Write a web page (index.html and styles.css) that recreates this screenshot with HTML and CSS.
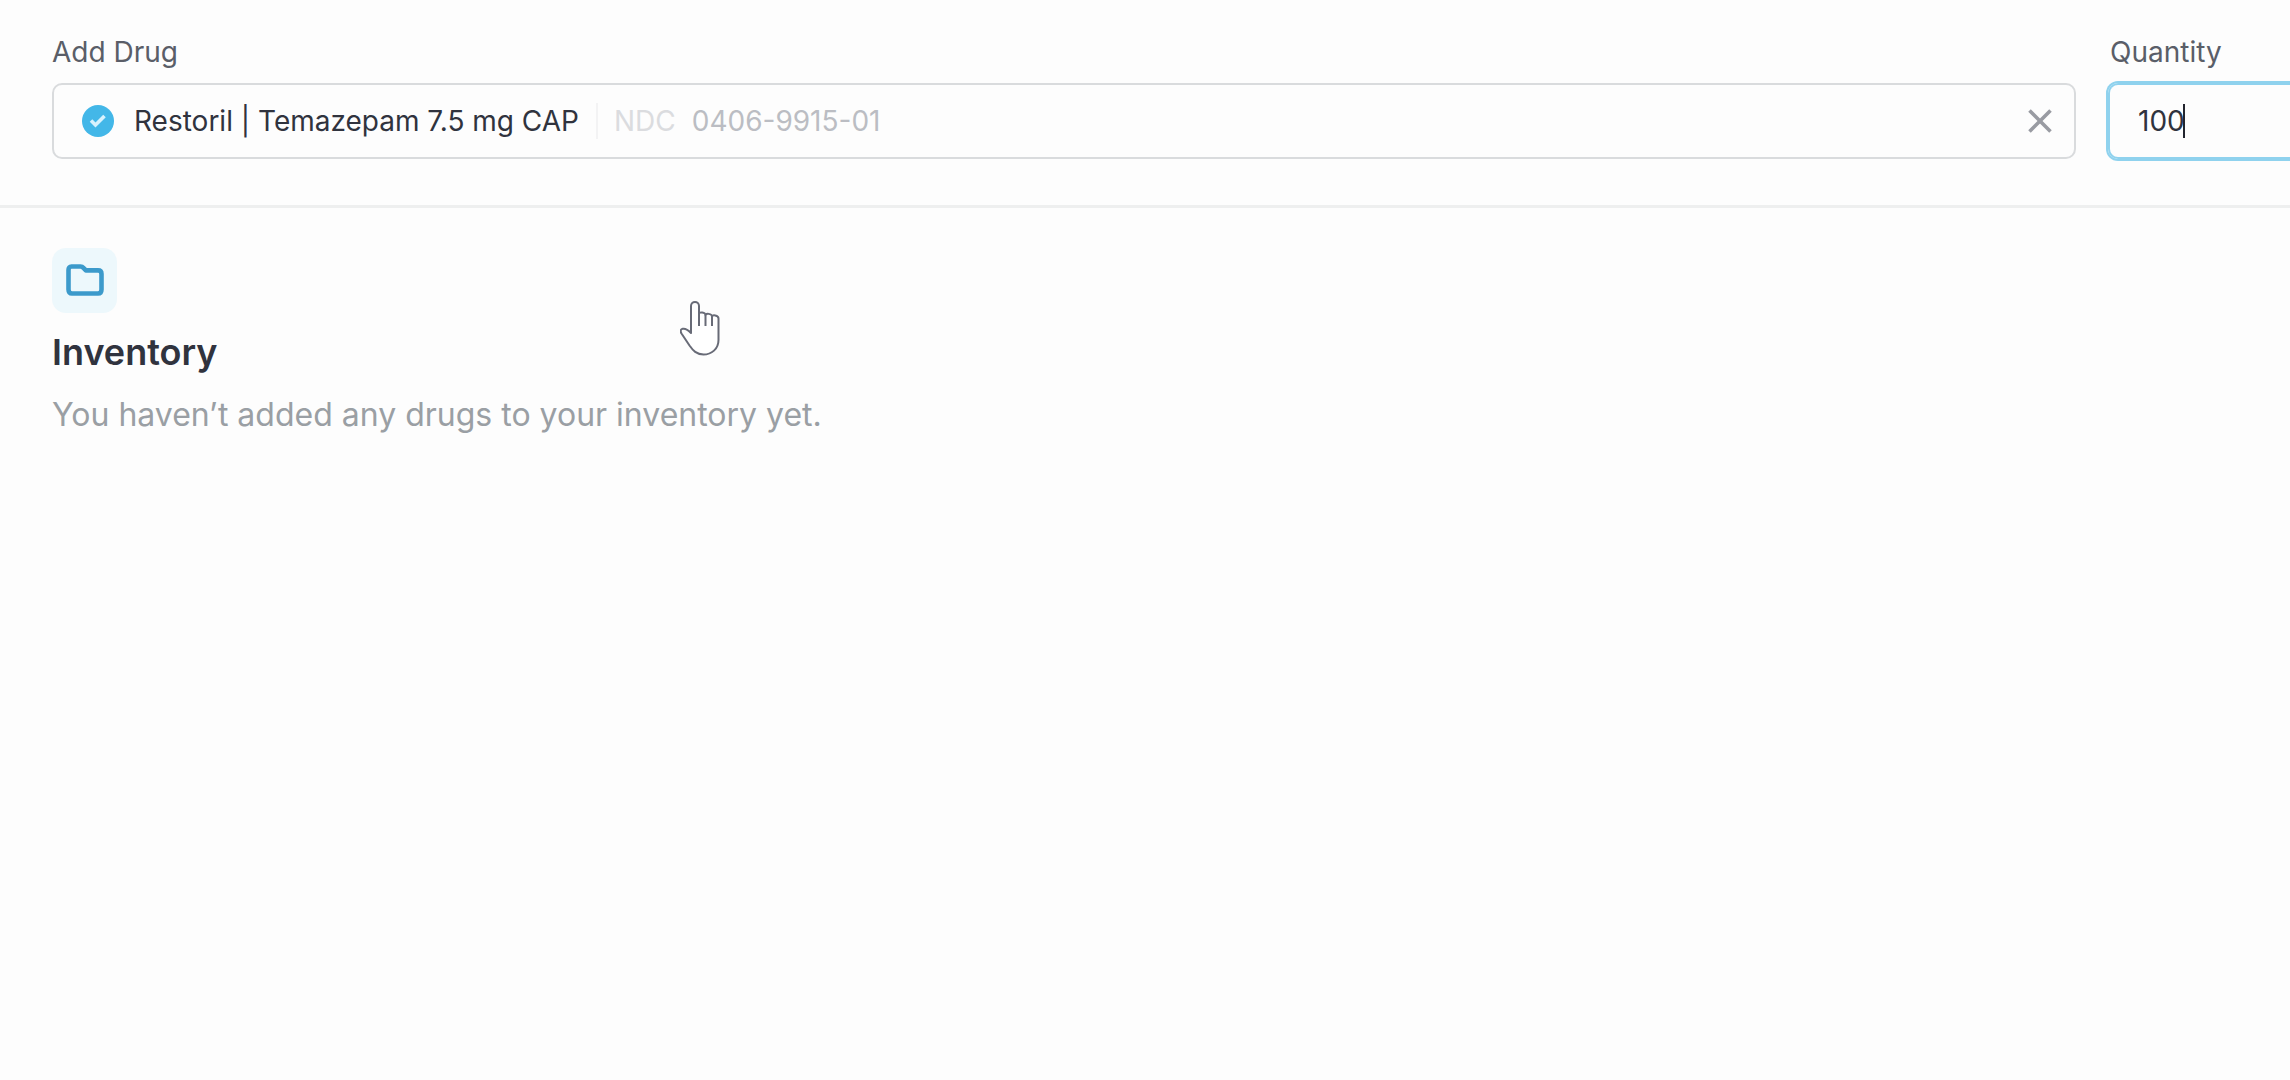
FILE: index.html
```html
<!DOCTYPE html>
<html lang="en">
<head>
    <meta charset="UTF-8">
    <meta name="viewport" content="width=device-width, initial-scale=1.0">
    <title>Inventory</title>
    <link rel="stylesheet" href="styles.css">
</head>
<body>
    <form class="add-bar">
        <div class="field">
            <label for="drug">Add Drug</label>
            <div class="control">
                <svg class="check" viewBox="0 0 32 32" aria-hidden="true">
                    <circle cx="16" cy="16" r="16" fill="#43b7e8"/>
                    <path d="M9 15.500l4.500 4.500 9-9" fill="none" stroke="#d8f2fd" stroke-width="3.600"/>
                </svg>
                <input type="text" id="drug" value="Restoril | Temazepam 7.5 mg CAP">
                <div class="ndc">
                    <span class="ndc-label">NDC</span>
                    <span class="ndc-number">0406-9915-01</span>
                </div>
                <button type="button" class="clear" aria-label="Clear drug">
                    <svg viewBox="0 0 24 24" aria-hidden="true">
                        <path d="M1.500 1.500l21 21M22.500 1.500l-21 21" fill="none" stroke="#999ba2" stroke-width="3.600"/>
                    </svg>
                </button>
            </div>
        </div>
        <div class="field quantity">
            <label for="quantity">Quantity</label>
            <div class="control active">
                <input type="text" id="quantity" inputmode="numeric" value="100">
                <span class="caret"></span>
            </div>
        </div>
    </form>

    <main class="inventory">
        <div class="folder">
            <svg viewBox="0 0 38 32" aria-hidden="true">
                <path d="M5.500 2.500h9c1.500 0 2.300.6 3.200 1.600l2.200 2.300H32c2.400 0 3.500 1.300 3.500 3.600V25.500c0 2.500-1.200 4-3.500 4H6c-2.400 0-3.500-1.500-3.500-4V6c0-2.300 1-3.500 3-3.500z" fill="none" stroke="#3c9acb" stroke-width="4.600" stroke-linejoin="round"/>
            </svg>
        </div>
        <h1>Inventory</h1>
        <p>You haven’t added any drugs to your inventory yet.</p>
    </main>

    <svg class="pointer" viewBox="0 0 40 56" aria-hidden="true">
        <path d="M11 33V6c0-5.500 8-5.500 8 0v8c0-2.500 6.500-2 6.500 1 0-2 6.500-1.500 6.500 1.500 0-2 6.500-1.500 6.500 2V40c0 9-7 14.500-15 14.500-7 0-10.500-4-14-9L1.500 33.500c-3-5 3-7.500 9.500-.5z" fill="#fff" stroke="#686b77" stroke-width="2" stroke-linejoin="round"/>
        <path d="M19 14v12M25.500 15v11M32 16.500V26" fill="none" stroke="#686b77" stroke-width="2"/>
    </svg>
</body>
</html>
```
FILE: styles.css
```css
* {
    box-sizing: border-box;
}

body {
    margin: 0;
    font-family: Inter, "Liberation Sans", sans-serif;
    background-color: #fdfdfd;
    color: #30333e;
}

.add-bar {
    display: flex;
    gap: 32px;
    padding: 34px 0 46px 52px;
    border-bottom: 3px solid #eeefef;
}

.field {
    flex: 1;
    min-width: 0;
}

.quantity {
    flex: 0 0 182px;
}

label {
    display: block;
    font-size: 28px;
    line-height: 36px;
    margin-bottom: 13px;
    color: #5a5e68;
}

.quantity label {
    padding-left: 2px;
}

.control {
    display: flex;
    align-items: center;
    height: 76px;
    padding: 0 22px 0 28px;
    border: 2px solid #d9dbdd;
    border-radius: 10px;
}

/* the quantity field runs up to the right edge */
.active {
    border-color: #8fd2ee;
    border-right: none;
    border-radius: 10px 0 0 10px;
    box-shadow: 0 0 0 2px #8fd2ee;
}

.check {
    width: 32px;
    height: 32px;
    margin-right: 20px;
}

input {
    field-sizing: content;
    padding: 0;
    border: none;
    outline: none;
    background: none;
    font-family: inherit;
    font-size: 28px;
    line-height: 36px;
    color: #30333e;
}

.caret {
    width: 2px;
    height: 34px;
    margin-left: -2px;
    background-color: #22252e;
}

.ndc {
    display: flex;
    gap: 16px;
    margin-left: 17px;
    padding-left: 16px;
    border-left: 2px solid #f3f3f4;
    font-size: 28px;
    line-height: 36px;
}

.ndc-label {
    color: #dbdcdf;
}

.ndc-number {
    color: #bbbdc3;
}

.clear {
    display: flex;
    margin-left: auto;
    padding: 0;
    border: none;
    background: none;
    cursor: pointer;
}

.clear svg {
    width: 24px;
    height: 24px;
}

.inventory {
    padding: 40px 52px;
}

.folder {
    display: flex;
    justify-content: center;
    width: 65px;
    height: 65px;
    padding-top: 16px;
    border-radius: 14px;
    background-color: #edf8fc;
}

.folder svg {
    width: 38px;
    height: 32px;
}

h1 {
    margin: 17px 0 21px;
    font-size: 36px;
    line-height: 44px;
    font-weight: 600;
}

p {
    margin: 0;
    font-size: 32px;
    line-height: 40px;
    color: #9a9fa4;
}

/* hand pointer lying over the page */
.pointer {
    position: absolute;
    left: 680px;
    top: 300px;
    width: 40px;
    height: 56px;
}
```
